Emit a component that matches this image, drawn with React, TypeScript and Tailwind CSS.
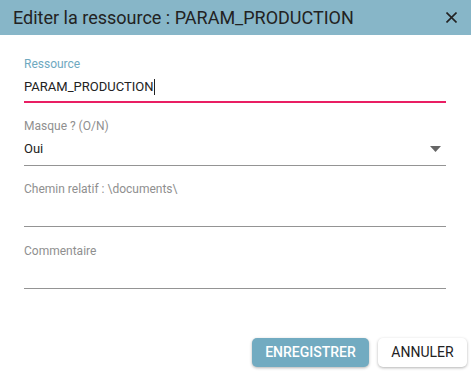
import React from "react";

export default function App() {
  return (
    <div className="w-[471px] h-[371px] bg-white overflow-hidden" style={{ fontFamily: "Roboto, 'Liberation Sans', sans-serif" }}>
      <div className="h-[35px] bg-[#87b6c8] flex items-center justify-between pl-[13px] pr-[14px]">
        <span className="text-[18px] text-[#222] leading-[22px]">Editer la ressource : PARAM_PRODUCTION</span>
        <svg width="11" height="11" viewBox="0 0 11 11">
          <path d="M0.5 0.5 L10.5 10.5 M10.5 0.5 L0.5 10.5" stroke="#222" strokeWidth="1.6" />
        </svg>
      </div>
      <div className="pl-[24px] pr-[25px]">
        <div className="pt-[22px]">
          <div className="text-[12px] leading-[14px] text-[#6fa9bf]">Ressource</div>
          <div className="mt-[6px] h-[20px] text-[13px] leading-[20px] text-[#222] flex items-center">
            PARAM_PRODUCTION<span className="inline-block w-[1px] h-[16px] bg-[#222] ml-[1px]"></span>
          </div>
          <div className="mt-[4px] h-[2px] bg-[#e91e63]"></div>
        </div>
        <div className="pt-[16px]">
          <div className="text-[12px] leading-[14px] text-[#8f8f8f]">Masque ? (O/N)</div>
          <div className="mt-[6px] h-[20px] text-[13px] leading-[20px] text-[#222] flex items-center justify-between">
            <span>Oui</span>
            <svg width="11" height="6" viewBox="0 0 11 6" className="mr-[5px]">
              <path d="M0 0 L11 0 L5.5 6 Z" fill="#666" />
            </svg>
          </div>
          <div className="mt-[6px] h-[1px] bg-[#949494]"></div>
        </div>
        <div className="pt-[16px]">
          <div className="text-[12px] leading-[14px] text-[#8f8f8f]">Chemin relatif : \documents\</div>
          <div className="mt-[6px] h-[20px]"></div>
          <div className="mt-[4px] h-[1px] bg-[#949494]"></div>
        </div>
        <div className="pt-[17px]">
          <div className="text-[12px] leading-[14px] text-[#8f8f8f]">Commentaire</div>
          <div className="mt-[6px] h-[20px]"></div>
          <div className="mt-[4px] h-[1px] bg-[#949494]"></div>
        </div>
      </div>
      <div className="flex justify-end gap-[9px] pr-[4px] mt-[49px]">
        <button className="h-[29px] w-[117px] rounded-[5px] bg-[#72abc1] text-white text-[14px] font-medium shadow-[0_1px_3px_rgba(0,0,0,0.3)]">ENREGISTRER</button>
        <button className="h-[29px] w-[89px] rounded-[5px] bg-white text-[#222] text-[14px] shadow-[0_1px_3px_rgba(0,0,0,0.3)]">ANNULER</button>
      </div>
    </div>
  );
}
